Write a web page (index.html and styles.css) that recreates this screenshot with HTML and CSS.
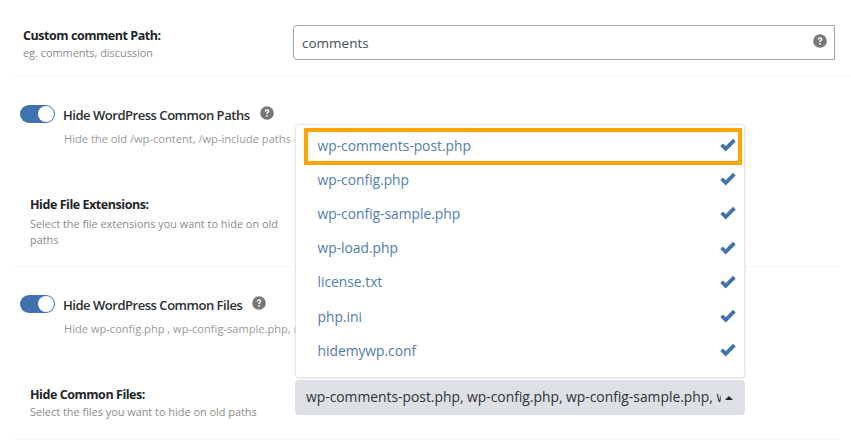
FILE: index.html
```html
<!DOCTYPE html>
<html lang="en">
<head>
<meta charset="utf-8">
<title>Hide My WP settings</title>
<link rel="stylesheet" href="styles.css">
</head>
<body>
<svg class="defs" width="0" height="0" aria-hidden="true">
  <symbol id="help" viewBox="0 0 14 14">
    <circle cx="7" cy="7" r="6.800" fill="#777"/>
    <path d="M4.700 5.500c.1-1.500 1.100-2.300 2.400-2.300 1.400 0 2.300.8 2.300 2 0 1.600-1.800 1.600-1.800 2.900H6.200c0-2.100 1.600-2.100 1.600-2.900 0-.4-.3-.7-.8-.7s-.8.300-.9 1z" fill="#fff"/>
    <rect x="6.200" y="9" width="1.500" height="1.700" fill="#fff"/>
  </symbol>
  <symbol id="check" viewBox="0 0 16 13">
    <path d="M.3 7.500 2.900 4.900 5.700 7.700 13 .3 15.700 3 5.700 12.900z" fill="#3f72af"/>
  </symbol>
</svg>
<main class="page">
  <section class="field-row first">
    <div class="label-col">
      <div class="label">Custom comment Path:</div>
      <div class="hint">eg. comments, discussion</div>
    </div>
    <div class="input">
      <span class="input-text">comments</span>
      <svg class="help-icon"><use href="#help"/></svg>
    </div>
  </section>

  <section class="switch-block paths">
    <div class="switch-line">
      <span class="toggle"><span class="knob"></span></span>
      <span class="switch-title">Hide WordPress Common Paths</span>
      <svg class="help-icon"><use href="#help"/></svg>
    </div>
    <div class="switch-hint">Hide the old /wp-content, /wp-include paths once they are changed</div>
  </section>

  <section class="field-row nested ext">
    <div class="label-col narrow">
      <div class="label">Hide File Extensions:</div>
      <div class="hint tall">Select the file extensions you want to hide on old paths</div>
    </div>
  </section>

  <section class="switch-block files">
    <div class="switch-line">
      <span class="toggle"><span class="knob"></span></span>
      <span class="switch-title">Hide WordPress Common Files</span>
      <svg class="help-icon"><use href="#help"/></svg>
    </div>
    <div class="switch-hint">Hide wp-config.php , wp-config-sample.php, readme.html, license.txt</div>
  </section>

  <section class="field-row nested common">
    <div class="label-col">
      <div class="label">Hide Common Files:</div>
      <div class="hint">Select the files you want to hide on old paths</div>
    </div>
    <div class="select-wrap">
      <ul class="menu">
        <li class="menu-item highlighted"><span>wp-comments-post.php</span><svg class="check"><use href="#check"/></svg></li>
        <li class="menu-item"><span>wp-config.php</span><svg class="check"><use href="#check"/></svg></li>
        <li class="menu-item"><span>wp-config-sample.php</span><svg class="check"><use href="#check"/></svg></li>
        <li class="menu-item"><span>wp-load.php</span><svg class="check"><use href="#check"/></svg></li>
        <li class="menu-item"><span>license.txt</span><svg class="check"><use href="#check"/></svg></li>
        <li class="menu-item"><span>php.ini</span><svg class="check"><use href="#check"/></svg></li>
        <li class="menu-item"><span>hidemywp.conf</span><svg class="check"><use href="#check"/></svg></li>
      </ul>
      <div class="select">
        <span class="select-text">wp-comments-post.php, wp-config.php, wp-config-sample.php, wp-load.php, license.txt</span>
        <span class="caret"></span>
      </div>
    </div>
  </section>
</main>
</body>
</html>
```
FILE: styles.css
```css
* { box-sizing: border-box; }
html, body { margin: 0; padding: 0; }
body {
  width: 851px;
  height: 444px;
  overflow: hidden;
  background: #fff;
  font-family: "Open Sans", "Noto Sans", sans-serif;
  color: #23282d;
}
.defs { position: absolute; }
.page { display: flex; flex-direction: column; }

.field-row { display: flex; align-items: flex-start; }
.first {
  height: 77px;
  margin-left: 10px;
  padding: 25px 0 0 13px;
  border-bottom: 1px solid #f8f8f8;
}
.label-col { width: 270px; flex: none; }
.label {
  font-size: 12.500px;
  font-weight: 700;
  line-height: 18px;
  letter-spacing: -.45px;
  color: #212529;
}
.hint { font-size: 10.900px; line-height: 16px; color: #8a8a8a; }
.first .label { margin-top: 2px; }

.input {
  width: 542px;
  height: 35px;
  display: flex;
  align-items: center;
  justify-content: space-between;
  padding: 0 7px 0 8px;
  border: 1px solid #a6a6a6;
  border-radius: 4px 0 0 4px;
  font-size: 13.500px;
  color: #495057;
}
.input-text { padding-top: 1px; }
.input .help-icon { margin-top: -3px; }
.help-icon { width: 14px; height: 14px; flex: none; }

.switch-block { padding-left: 20px; }
.switch-line { display: flex; align-items: center; height: 18px; }
.toggle {
  width: 35px;
  height: 18px;
  flex: none;
  display: flex;
  justify-content: flex-end;
  align-items: center;
  padding-right: 1px;
  border-radius: 9px;
  background: #3f72af;
}
.knob { width: 16px; height: 16px; border-radius: 50%; background: #fff; }
.switch-title {
  margin-left: 8px;
  padding-top: 2px;
  font-size: 13px;
  font-weight: 600;
  letter-spacing: -.47px;
  color: #2b2f33;
}
.switch-line .help-icon { margin-left: 10px; margin-top: -2px; }
.switch-hint {
  width: 231px;
  margin: 7px 0 0 44px;
  overflow: hidden;
  font-size: 11.100px;
  line-height: 18px;
  color: #999;
  white-space: nowrap;
}
.paths { margin-top: 28px; height: 91px; }

.nested { padding-left: 30px; }
.ext {
  height: 71px;
  margin-left: 13px;
  margin-right: 11px;
  padding: 0 0 0 17px;
  border-bottom: 1px solid #f6f6f6;
}
.narrow { width: 256px; }
.tall { margin-top: 2px; }

.files { margin-top: 28px; height: 85px; }
.common {
  height: 60px;
  margin-left: 13px;
  margin-right: 11px;
  padding: 0 0 0 17px;
  border-bottom: 1px solid #f6f6f6;
}
.common .label-col { width: 265px; margin-top: 6px; }

.select-wrap { position: relative; width: 450px; }
.select {
  height: 35px;
  display: flex;
  align-items: center;
  padding: 0 12px 0 11px;
  border-radius: 4px;
  background: #dde0e4;
  font-size: 13.850px;
  color: #2f3439;
}
.select-text { flex: 1; min-width: 0; overflow: hidden; white-space: nowrap; padding-bottom: 2px; }
.caret {
  margin-left: 4px;
  width: 0;
  height: 0;
  border-left: 4px solid transparent;
  border-right: 4px solid transparent;
  border-bottom: 4px solid #23282d;
}
.menu {
  position: absolute;
  left: 0;
  right: 0;
  bottom: 37px;
  height: 254px;
  margin: 0;
  padding: 3px 0 0;
  list-style: none;
  background: #fff;
  border: 1px solid #e4e4e4;
  border-radius: 4px;
  box-shadow: 1px 1px 1px rgba(0, 0, 0, .05);
}
.menu-item {
  height: 34.200px;
  display: flex;
  align-items: center;
  justify-content: space-between;
  padding: 0 8.500px 0 21.500px;
  font-size: 13.800px;
  color: #4f7cb5;
}
.highlighted { position: relative; }
.highlighted::after {
  content: "";
  position: absolute;
  left: 8px;
  right: 2px;
  top: 0;
  bottom: -3px;
  border: 4px solid #ffa500;
}
.check { width: 16px; height: 14px; flex: none; }
```
